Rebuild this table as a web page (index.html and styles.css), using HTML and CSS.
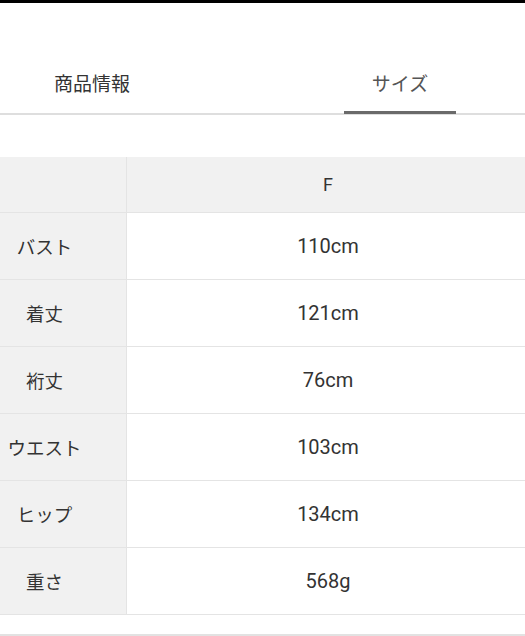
FILE: index.html
```html
<!DOCTYPE html>
<html lang="ja">
<head>
<meta charset="utf-8">
<link rel="stylesheet" href="styles.css">
</head>
<body>
<div class="topbar"></div>
<nav class="tabs">
  <div class="tab first"><span class="tab-label">商品情報</span></div>
  <div class="tab active"><span class="tab-label">サイズ</span><span class="indicator"></span></div>
</nav>
<div class="table">
  <div class="row head"><div class="cell label"></div><div class="cell value">F</div></div>
  <div class="row"><div class="cell label">バスト</div><div class="cell value">110cm</div></div>
  <div class="row"><div class="cell label">着丈</div><div class="cell value">121cm</div></div>
  <div class="row"><div class="cell label">裄丈</div><div class="cell value">76cm</div></div>
  <div class="row"><div class="cell label">ウエスト</div><div class="cell value">103cm</div></div>
  <div class="row"><div class="cell label">ヒップ</div><div class="cell value">134cm</div></div>
  <div class="row"><div class="cell label">重さ</div><div class="cell value">568g</div></div>
</div>
<div class="footer-line"></div>
</body>
</html>
```
FILE: styles.css
```css
html, body {
  margin: 0;
  padding: 0;
  background: #fff;
  font-family: Roboto, "Noto Sans CJK JP", sans-serif;
  color: #333;
}
.topbar {
  height: 3px;
  background: #000;
}
.tabs {
  display: flex;
  gap: 160px;
  border-bottom: 2px solid #dedede;
}
.tab {
  flex: 0 0 112px;
  height: 110px;
  display: flex;
  flex-direction: column;
  align-items: center;
  justify-content: flex-end;
  position: relative;
}
.tab.first {
  flex-basis: 184px;
}
.tab-label {
  font-family: "Noto Sans CJK JP", sans-serif;
  font-size: 19px;
  line-height: 24px;
  color: #333;
  margin-bottom: 18px;
  white-space: nowrap;
}
.tab.active .tab-label {
  color: #555;
}
.indicator {
  position: absolute;
  bottom: -1px;
  left: 0;
  right: 0;
  height: 3px;
  background: #6a6a6a;
}
.table {
  margin-top: 42px;
  display: flex;
  flex-direction: column;
}
.row {
  display: grid;
  grid-template-columns: 127px 1fr;
  height: 67px;
  border-bottom: 1px solid #e4e4e4;
  box-sizing: border-box;
}
.row.head {
  height: 56px;
  background: #f1f1f1;
}
.cell {
  display: flex;
  align-items: center;
  justify-content: center;
}
.label {
  background: #f1f1f1;
  border-right: 1px solid #e4e4e4;
  padding-right: 37px;
  font-family: "Noto Sans CJK JP", sans-serif;
  font-size: 18.5px;
  color: #333;
}
.value {
  padding-left: 4px;
  font-size: 20px;
  color: #333;
}
.head .value {
  font-size: 18px;
}
.footer-line {
  margin-top: 19px;
  height: 2px;
  background: #e2e2e2;
}
```
